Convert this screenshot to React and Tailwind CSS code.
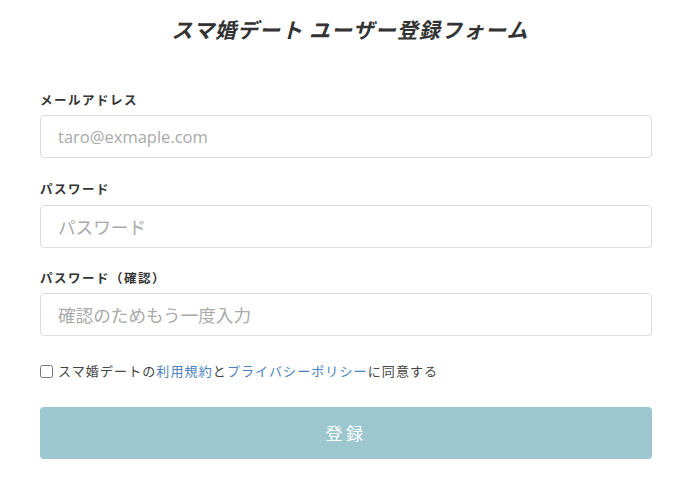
import React from "react";

const jp = { fontFamily: '"Noto Sans CJK JP", "Noto Sans", sans-serif' };

export default function App() {
  return (
    <div className="w-[700px] h-[500px] bg-white" style={jp}>
      <div className="px-10 pt-[15px]">
        <h1 className="text-center text-[21px] font-bold italic text-[#333] tracking-[0.05em] leading-[28px]">
          スマ婚デート ユーザー登録フォーム
        </h1>
        <form className="mt-[48px] w-[612px]">
          <label className="block text-[12.5px] font-bold text-[#333] tracking-[0.12em] leading-[18px]">
            メールアドレス
          </label>
          <input
            type="email"
            placeholder="taro@exmaple.com"
            className="mt-[6px] block w-full h-[43px] rounded-[4px] border border-[#dcdcdc] px-[17px] text-[16.5px] placeholder:text-[#a9a9a9] outline-none"
            style={{ fontFamily: '"Open Sans", "Noto Sans CJK JP", sans-serif' }}
          />
          <label className="mt-[22px] block text-[12.5px] font-bold text-[#333] tracking-[0.12em] leading-[18px]">
            パスワード
          </label>
          <input
            type="password"
            placeholder="パスワード"
            className="mt-[7px] block w-full h-[43px] rounded-[4px] border border-[#dcdcdc] px-[17px] text-[17.6px] placeholder:text-[#a9a9a9] outline-none"
          />
          <label className="mt-[21px] block text-[12.5px] font-bold text-[#333] tracking-[0.12em] leading-[18px]">
            パスワード（確認）
          </label>
          <input
            type="password"
            placeholder="確認のためもう一度入力"
            className="mt-[6px] block w-full h-[43px] rounded-[4px] border border-[#dcdcdc] px-[17px] text-[17.6px] placeholder:text-[#a9a9a9] outline-none"
          />
          <div className="mt-[26px] flex items-center gap-[5px] text-[13px] text-[#444] tracking-[0.085em] leading-[18px]">
            <input type="checkbox" className="w-[13px] h-[13px] m-0" />
            <span>
              スマ婚デートの<span className="text-[#4a7fc0]">利用規約</span>と
              <span className="text-[#4a7fc0]">プライバシーポリシー</span>に同意する
            </span>
          </div>
          <button
            type="button"
            className="mt-[27px] block w-full h-[52px] rounded-[4px] bg-[#9cc7cf] text-white text-[17px] tracking-[0.2em]"
          >
            登録
          </button>
        </form>
      </div>
    </div>
  );
}
